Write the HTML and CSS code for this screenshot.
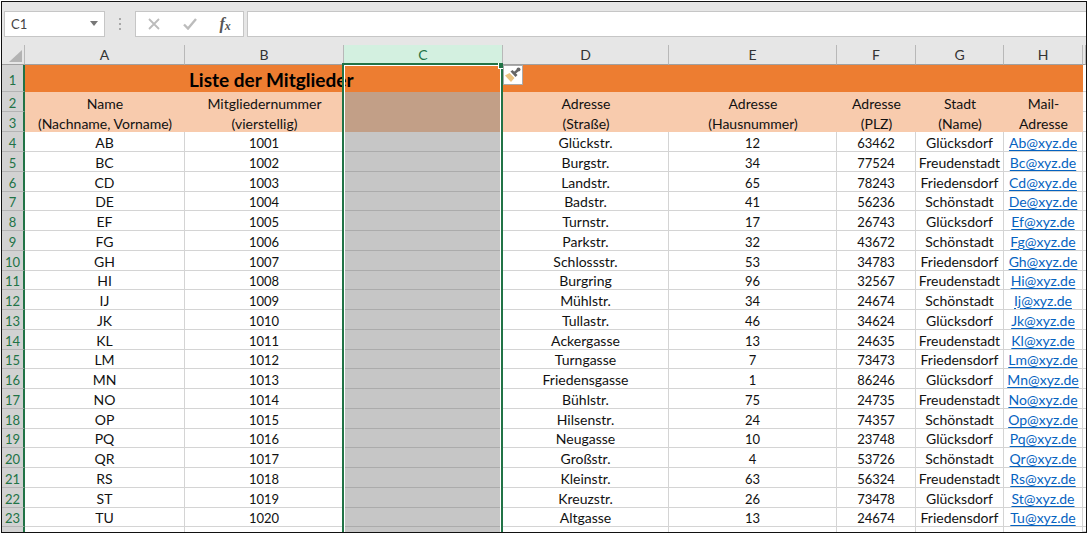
FILE: index.html
```html
<!DOCTYPE html>
<html lang="de">
<head>
<meta charset="utf-8">
<title>Liste der Mitglieder</title>
<link rel="stylesheet" href="styles.css">
</head>
<body>
<main class="window">
  <div class="formula-bar">
    <div class="name-box">
      <input class="name-input" type="text" value="C1" aria-label="Namenfeld">
      <button class="name-toggle" type="button" aria-label="Namen anzeigen"><svg width="8" height="5" viewBox="0 0 8 5"><path d="M0 0h8L4 5z" fill="#777"/></svg></button>
    </div>
    <svg class="grip" width="4" height="12" viewBox="0 0 4 12"><path d="M1 0h2v2H1zM1 5h2v2H1zM1 10h2v2H1z" fill="#a8a8a8"/></svg>
    <div class="actions">
      <button class="action" type="button" aria-label="Abbrechen"><svg width="12" height="12" viewBox="0 0 12 12"><path d="M1 1l10 10M11 1L1 11" stroke="#bcbcbc" stroke-width="1.8" fill="none"/></svg></button>
      <button class="action" type="button" aria-label="Eingeben"><svg width="14" height="12" viewBox="0 0 14 12"><path d="M1 6.5l4 4L13 1" stroke="#bcbcbc" stroke-width="2.4" fill="none"/></svg></button>
      <button class="action fx" type="button" aria-label="Funktion einfügen"><i>f</i><i class="fx-x">x</i></button>
    </div>
    <input class="formula" type="text" aria-label="Formel">
  </div>
  <div class="sheet">
    <table class="grid">
      <colgroup><col class="c-num"><col class="c-a"><col class="c-b"><col class="c-c"><col class="c-d"><col class="c-e"><col class="c-f"><col class="c-g"><col class="c-h"><col></colgroup>
      <thead>
        <tr><th class="corner"><svg width="13" height="12" viewBox="0 0 13 12"><path d="M13 0v12H0z" fill="#b3b3b3"/></svg></th><th>A</th><th>B</th><th class="picked">C</th><th>D</th><th>E</th><th>F</th><th>G</th><th>H</th><th></th></tr>
      </thead>
      <tbody id="rows">
        <tr class="title"><th>1</th><td></td><td class="title-text">Liste der Mitglieder</td><td></td><td></td><td></td><td></td><td></td><td></td><td class="rest"></td></tr>
        <tr class="label"><th>2</th><td>Name</td><td>Mitgliedernummer</td><td class="shade"></td><td>Adresse</td><td>Adresse</td><td>Adresse</td><td>Stadt</td><td>Mail-</td><td class="rest"></td></tr>
        <tr class="label"><th>3</th><td>(Nachname, Vorname)</td><td>(vierstellig)</td><td class="shade"></td><td>(Straße)</td><td>(Hausnummer)</td><td>(PLZ)</td><td>(Name)</td><td>Adresse</td><td class="rest"></td></tr>
      </tbody>
    </table>
    <div class="selection"><span class="handle"></span></div>
    <button class="paste-options" type="button" aria-label="Formatoptionen"><svg width="18" height="18" viewBox="0 0 18 18"><path d="M1 9.500l4.500-2.500 5 5-3.500 4z" fill="#ebc27f"/><path d="M6.500 5.500l2-1.500 5 5-2 2z" fill="#666"/><path d="M10.500 7l3-2.500" stroke="#666" stroke-width="2.500"/><circle cx="14.500" cy="3.500" r="2" fill="#666"/></svg></button>
  </div>
</main>
<script src="members.js"></script>
</body>
</html>
```
FILE: styles.css
```css
* { box-sizing: border-box; }

body {
  margin: 0;
  padding: 1px;
  background: #fff;
  color: #111;
  font: 14px/18px Lato, sans-serif;
}

button, input {
  margin: 0;
  padding: 0;
  border: 0;
  background: none;
  color: inherit;
  font: inherit;
}

.window {
  border: 1px solid #111;
  background: #e6e6e6;
  overflow: hidden;
}

.formula-bar {
  display: flex;
  align-items: center;
  height: 43px;
  padding: 0 0 0 2px;
}

.name-box, .actions, .formula {
  height: 26px;
  border: 1px solid #c6c6c6;
  background: #fff;
}

.name-box {
  display: flex;
  width: 101px;
  color: #444;
}

.name-input {
  flex: 1;
  min-width: 0;
  padding-left: 6px;
  font-size: 13px;
}

.name-toggle {
  display: flex;
  align-items: center;
  justify-content: center;
  width: 20px;
}

.grip { margin: 0 13px; }

.actions {
  display: flex;
  width: 109px;
  margin-right: 3px;
}

.action {
  display: flex;
  flex: 1;
  align-items: center;
  justify-content: center;
}

.fx {
  color: #555;
  font: bold 16px/20px "Liberation Serif", serif;
}

.fx-x {
  padding-top: 4px;
  font-size: 12px;
}

.formula {
  flex: 1;
  min-width: 0;
  padding: 0 6px;
  border-right: 0;
}

.sheet { position: relative; }

.grid {
  width: 100%;
  table-layout: fixed;
  border-collapse: separate;
  border-spacing: 0;
}

.c-num { width: 23px; }
.c-a { width: 160px; }
.c-b { width: 159px; }
.c-c { width: 159px; }
.c-d { width: 166px; }
.c-e { width: 168px; }
.c-f { width: 79px; }
.c-g { width: 88px; }
.c-h { width: 79px; }

th {
  padding: 0;
  font-weight: 400;
  line-height: 18px;
}

thead th {
  height: 20px;
  border-right: 1px solid #b8b8b8;
  border-bottom: 1px solid #a0a0a0;
  color: #333;
}

thead .picked {
  background: #d3f0e0;
  color: #217346;
}

.corner svg {
  display: block;
  margin: 3px 0 0 7px;
}

tbody th, td {
  height: 20px;
  padding: 3px 0 0;
  line-height: 16px;
}

tbody th {
  border-right: 2px solid #217346;
  border-bottom: 1px solid #b4b4b4;
  background: #d2d2d2;
  color: #217346;
  font-size: 13px;
}

td {
  border-right: 1px solid #d4d4d4;
  border-bottom: 1px solid #d4d4d4;
  background: #fff;
  text-align: center;
  white-space: nowrap;
}

.number { font-size: 13px; }

tbody tr:nth-child(4n+7) > * {
  height: 19px;
  padding-top: 2px;
}

.title > * { height: 27px; }

.title td {
  border: 0;
  background: #ed7d31;
}

.title .title-text {
  position: relative;
  z-index: 1;
  padding-left: 4px;
  text-align: left;
  color: #000;
  font-size: 19px;
  font-weight: 700;
  overflow: visible;
}

.label td {
  border: 0;
  background: #f8cbad;
}

.label .shade { background: #c29f87; }

.member .shade {
  background: #c6c6c6;
  border-color: #ababab;
}

.grid .rest {
  border-right: 0;
  border-bottom: 1px solid #d4d4d4;
  background: #fff;
}

tbody .partial > * {
  height: 5px;
  padding: 0;
  border-bottom: 0;
  line-height: 0;
}

a {
  color: #0563c1;
  text-decoration: underline;
  text-underline-offset: 2px;
}

.selection {
  position: absolute;
  z-index: 2;
  top: 18px;
  bottom: 0;
  left: 340px;
  width: 161px;
  border: 2px solid #217346;
  border-bottom: 0;
  box-shadow: inset 1px 1px #fff, inset -1px 0 #fff;
}

.handle {
  position: absolute;
  top: -2px;
  right: -2px;
  width: 5px;
  height: 6px;
  border: 1px solid #fff;
  border-width: 0 0 1px 1px;
  background: #217346;
}

.paste-options {
  position: absolute;
  z-index: 2;
  top: 20px;
  left: 501px;
  width: 20px;
  height: 20px;
  border: 1px solid #aaa;
  background: #fff;
}

.paste-options svg { display: block; }
```
FILE: members.js
```js
const members = [
  ["AB", 1001, "Glückstr.", 12, "63462", "Glücksdorf"],
  ["BC", 1002, "Burgstr.", 34, "77524", "Freudenstadt"],
  ["CD", 1003, "Landstr.", 65, "78243", "Friedensdorf"],
  ["DE", 1004, "Badstr.", 41, "56236", "Schönstadt"],
  ["EF", 1005, "Turnstr.", 17, "26743", "Glücksdorf"],
  ["FG", 1006, "Parkstr.", 32, "43672", "Schönstadt"],
  ["GH", 1007, "Schlossstr.", 53, "34783", "Friedensdorf"],
  ["HI", 1008, "Burgring", 96, "32567", "Freudenstadt"],
  ["IJ", 1009, "Mühlstr.", 34, "24674", "Schönstadt"],
  ["JK", 1010, "Tullastr.", 46, "34624", "Glücksdorf"],
  ["KL", 1011, "Ackergasse", 13, "24635", "Freudenstadt"],
  ["LM", 1012, "Turngasse", 7, "73473", "Friedensdorf"],
  ["MN", 1013, "Friedensgasse", 1, "86246", "Glücksdorf"],
  ["NO", 1014, "Bühlstr.", 75, "24735", "Freudenstadt"],
  ["OP", 1015, "Hilsenstr.", 24, "74357", "Schönstadt"],
  ["PQ", 1016, "Neugasse", 10, "23748", "Glücksdorf"],
  ["QR", 1017, "Großstr.", 4, "53726", "Schönstadt"],
  ["RS", 1018, "Kleinstr.", 63, "56324", "Freudenstadt"],
  ["ST", 1019, "Kreuzstr.", 26, "73478", "Glücksdorf"],
  ["TU", 1020, "Altgasse", 13, "24674", "Friedensdorf"]
];

const body = document.getElementById("rows");
members.forEach(([name, id, street, house, zip, city], i) => {
  const mail = name[0] + name[1].toLowerCase() + "@xyz.de";
  body.insertAdjacentHTML("beforeend",
    `<tr class="member"><th>${i + 4}</th><td>${name}</td><td class="number">${id}</td><td class="shade"></td><td>${street}</td><td class="number">${house}</td><td class="number">${zip}</td><td>${city}</td><td><a href="mailto:${mail}">${mail}</a></td><td class="rest"></td></tr>`);
});
body.insertAdjacentHTML("beforeend",
  `<tr class="member partial"><th></th><td></td><td></td><td class="shade"></td><td></td><td></td><td></td><td></td><td></td><td class="rest"></td></tr>`);
```
